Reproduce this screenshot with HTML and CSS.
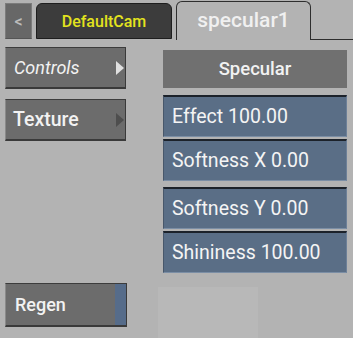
FILE: index.html
```html
<!DOCTYPE html>
<html>
<head>
<meta charset="utf-8">
<link rel="stylesheet" href="styles.css">
</head>
<body>
<div class="tabs">
  <div class="back">&lt;</div>
  <div class="tab cam">DefaultCam</div>
  <div class="tab active">specular1</div>
  <div class="tab-rest"></div>
</div>
<div class="main">
  <div class="left">
    <div class="btn menu"><span class="ital">Controls</span><span class="arrow light"></span></div>
    <div class="btn menu"><span class="tex">Texture</span><span class="arrow dark"></span></div>
  </div>
  <div class="right">
    <div class="header">Specular</div>
    <div class="group">
      <div class="field">Effect 100.00</div>
      <div class="field">Softness X 0.00</div>
    </div>
    <div class="group">
      <div class="field">Softness Y 0.00</div>
      <div class="field">Shininess 100.00</div>
    </div>
  </div>
</div>
<div class="bottom">
  <div class="btn regen"><span>Regen</span><span class="strip"></span></div>
  <div class="ghost"></div>
</div>
</body>
</html>
```
FILE: styles.css
```css
html, body {
  margin: 0;
  padding: 0;
  background: #b3b3b3;
  width: 353px;
  height: 338px;
  overflow: hidden;
  font-family: Roboto, "Open Sans", sans-serif;
}
.tabs {
  display: flex;
  align-items: flex-end;
  padding: 3px 0 0 5px;
  height: 40px;
  box-sizing: border-box;
}
.back {
  width: 27px;
  height: 36px;
  box-sizing: border-box;
  background: #676767;
  border: 1px solid #7c7c7c;
  border-bottom-color: #555;
  color: #bdbdbd;
  font-size: 16px;
  font-weight: 500;
  display: flex;
  align-items: center;
  justify-content: center;
  margin-right: 4px;
  margin-bottom: 1px;
}
.tab {
  height: 37px;
  box-sizing: border-box;
  border-radius: 6px 6px 0 0;
  display: flex;
  align-items: center;
  justify-content: center;
  font-size: 16px;
  font-weight: 500;
}
.cam {
  width: 136px;
  background: #3c3c3c;
  border: 1px solid #1e1e1e;
  color: #e3e31e;
  margin-right: 4px;
  margin-bottom: 1px;
  height: 36px;
}
.active {
  width: 135px;
  height: 39px;
  border: 1.5px solid #2e2e2e;
  border-bottom: none;
  color: #f0f0f0;
  font-size: 21px;
  padding-bottom: 2px;
}
.tab-rest {
  flex: 1;
  border-bottom: 1.5px solid #2e2e2e;
}
.main {
  display: flex;
  padding: 7px 6px 0 5px;
  gap: 37px;
}
.left {
  width: 121px;
  display: flex;
  flex-direction: column;
  gap: 10px;
}
.btn {
  background: #6c6c6c;
  height: 42px;
  box-sizing: border-box;
  border: 1px solid #8a8a8a;
  border-right: 1.5px solid #3a3a3a;
  border-bottom: 2px solid #3a3a3a;
  border-top: 1.5px solid #3c3c3c;
  display: flex;
  align-items: center;
  color: #f2f2f2;
  font-size: 18px;
  font-weight: 500;
  padding-left: 7px;
  position: relative;
}
.ital {
  font-style: italic;
  font-weight: 400;
  padding-left: 1px;
}
.tex {
  font-size: 19.5px;
}
.arrow {
  position: absolute;
  right: 1px;
  top: 13px;
  width: 0;
  height: 0;
  border-top: 7px solid transparent;
  border-bottom: 7px solid transparent;
  border-left: 8px solid #e0e0e0;
}
.arrow.dark {
  border-left-color: #4e4e4e;
}
.right {
  width: 184px;
  display: flex;
  flex-direction: column;
}
.header {
  margin-top: 3px;
  height: 38px;
  background: #707070;
  display: flex;
  align-items: center;
  justify-content: center;
  color: #f2f2f2;
  font-size: 18.5px;
  font-weight: 500;
  margin-bottom: 7px;
}
.group {
  display: flex;
  flex-direction: column;
  gap: 2px;
  margin-bottom: 6px;
}
.field {
  height: 42px;
  box-sizing: border-box;
  background: #5a6e86;
  border-top: 2px solid #1c222a;
  border-left: 1px solid #48576a;
  border-right: 1px solid #6d8098;
  border-bottom: 1px solid #7b8ea5;
  color: #f4f4f4;
  font-size: 19.5px;
  font-weight: 400;
  display: flex;
  align-items: center;
  padding-left: 8px;
}
.bottom {
  display: flex;
  padding: 4px 0 0 5px;
  gap: 31px;
  align-items: flex-start;
}
.regen {
  width: 122px;
  height: 44px;
  padding-left: 9px;
}
.strip {
  position: absolute;
  right: 0;
  top: 0;
  bottom: 0;
  width: 11px;
  background: #566c8a;
}
.ghost {
  width: 100px;
  height: 52px;
  margin-top: 4px;
  background: #b8b8b8;
}
```
